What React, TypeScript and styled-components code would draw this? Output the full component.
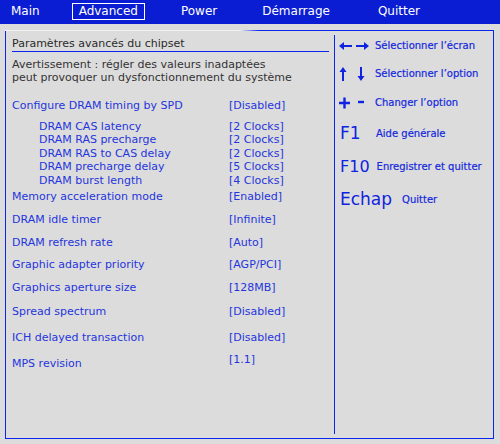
import React from "react";
import styled, { createGlobalStyle } from "styled-components";

const Global = createGlobalStyle`
  html, body { margin: 0; padding: 0; background: #dcdcdc; }
  body { font-family: "DejaVu Sans", Verdana, sans-serif; }
`;

const Page = styled.div`
  width: 500px;
  height: 444px;
  background: #dcdcdc;
  display: flex;
  flex-direction: column;
  overflow: hidden;
`;

const MenuBar = styled.div`
  height: 24px;
  background: #0a1dd2;
  display: flex;
  align-items: center;
  flex-shrink: 0;
`;

const MenuItem = styled.div<{ $x: number; $active?: boolean }>`
  margin-left: ${(p) => p.$x}px;
  height: 17px;
  line-height: 15px;
  padding: 0 6px;
  font-size: 12px;
  color: #ffffff;
  white-space: nowrap;
  box-sizing: border-box;
  border: 1px solid ${(p) => (p.$active ? "#ffffff" : "transparent")};
  margin-top: -1px;
`;

const Frame = styled.div`
  margin: 6px 0 0 5px;
  width: 489px;
  height: 409px;
  box-sizing: border-box;
  border: 1px solid #0a26ee;
  border-top: none;
  display: flex;
  flex-direction: column;
`;

const TopEdge = styled.div`
  height: 1px;
  margin: 0 -1px;
  background: linear-gradient(to right, #f2f2f2 0%, #f2f2f2 48%, #0a26ee 52%, #0a26ee 100%);
  flex-shrink: 0;
`;

const Body = styled.div`
  flex: 1;
  display: flex;
`;

const LeftPanel = styled.div`
  width: 328px;
  padding: 5px 5px 0 6px;
  box-sizing: border-box;
  display: flex;
  flex-direction: column;
`;

const Divider = styled.div`
  width: 1px;
  background: #0a26ee;
  margin: 4px 0 4px 0;
`;

const RightPanel = styled.div`
  flex: 1;
  padding: 1px 0 0 2px;
  display: flex;
  flex-direction: column;
`;

const Title = styled.div`
  font-size: 11px;
  line-height: 15px;
  color: #2a2a2a;
  border-bottom: 1px solid #0a26ee;
  white-space: nowrap;
`;

const Warning = styled.div`
  margin-top: 6px;
  font-size: 11px;
  line-height: 13px;
  color: #333333;
  white-space: nowrap;
`;

const Row = styled.div<{ $mt: number; $sub?: boolean }>`
  display: grid;
  grid-template-columns: 217px 1fr;
  align-items: start;
  margin-top: ${(p) => p.$mt}px;
  font-size: 11px;
  line-height: ${(p) => (p.$sub ? "13.5px" : "14px")};
  color: #2535dc;
  white-space: nowrap;
`;

const Label = styled.div<{ $indent?: boolean }>`
  padding-left: ${(p) => (p.$indent ? 27 : 0)}px;
`;

const Value = styled.div<{ $lift?: number }>`
  margin-top: ${(p) => -(p.$lift || 0)}px;
`;

const SubGroup = styled.div`
  display: flex;
  flex-direction: column;
  margin-top: 7px;
`;

const HelpRow = styled.div<{ $h: number; $gap: number; $pl: number }>`
  height: ${(p) => p.$h}px;
  display: flex;
  align-items: center;
  gap: ${(p) => p.$gap}px;
  padding-left: ${(p) => p.$pl}px;
  color: #0f23e0;
  white-space: nowrap;
`;

const KeyIcon = styled.div`
  width: 36px;
  display: flex;
  align-items: center;
`;

const KeyText = styled.div<{ $size: number }>`
  font-size: ${(p) => p.$size}px;
  line-height: 1;
`;

const HelpText = styled.div`
  font-size: 10px;
  line-height: 12px;
  color: #1428dc;
  -webkit-text-stroke: 0.2px #1428dc;
`;

const BLUE = "#0f23e0";

const ArrowsLR = () => (
  <svg width="32" height="12" viewBox="0 0 32 12">
    <path d="M3 6 H14" stroke={BLUE} strokeWidth="2" />
    <path d="M1 6 L6 2 L6 10 Z" fill={BLUE} />
    <path d="M18 6 H29" stroke={BLUE} strokeWidth="2" />
    <path d="M31 6 L26 2 L26 10 Z" fill={BLUE} />
  </svg>
);

const ArrowsUD = () => (
  <svg width="30" height="16" viewBox="0 0 30 16">
    <path d="M5 4 V15" stroke={BLUE} strokeWidth="2" />
    <path d="M5 1 L1.5 6 L8.5 6 Z" fill={BLUE} />
    <path d="M23 1 V12" stroke={BLUE} strokeWidth="2" />
    <path d="M23 15 L19.5 10 L26.5 10 Z" fill={BLUE} />
  </svg>
);

const PlusMinus = () => (
  <svg width="30" height="12" viewBox="0 0 30 12">
    <path d="M1 6 H12 M6.5 0.5 V11.5" stroke={BLUE} strokeWidth="2.4" />
    <path d="M20 5 H26" stroke={BLUE} strokeWidth="2.4" />
  </svg>
);

const menu = [
  { label: "Main", x: 4 },
  { label: "Advanced", x: 25, active: true },
  { label: "Power", x: 29 },
  { label: "Démarrage", x: 31 },
  { label: "Quitter", x: 34 },
];

const subs: [string, string][] = [
  ["DRAM CAS latency", "[2 Clocks]"],
  ["DRAM RAS precharge", "[2 Clocks]"],
  ["DRAM RAS to CAS delay", "[2 Clocks]"],
  ["DRAM precharge delay", "[5 Clocks]"],
  ["DRAM burst length", "[4 Clocks]"],
];

const rows: { label: string; value: string; mt: number; lift?: number }[] = [
  { label: "Memory acceleration mode", value: "[Enabled]", mt: 2.5 },
  { label: "DRAM idle timer", value: "[Infinite]", mt: 9 },
  { label: "DRAM refresh rate", value: "[Auto]", mt: 9 },
  { label: "Graphic adapter priority", value: "[AGP/PCI]", mt: 8 },
  { label: "Graphics aperture size", value: "[128MB]", mt: 9 },
  { label: "Spread spectrum", value: "[Disabled]", mt: 10 },
  { label: "ICH delayed transaction", value: "[Disabled]", mt: 12 },
  { label: "MPS revision", value: "[1.1]", mt: 12, lift: 4 },
];

export default function App() {
  return (
    <Page>
      <Global />
      <MenuBar>
        {menu.map((m) => (
          <MenuItem key={m.label} $x={m.x} $active={m.active}>
            {m.label}
          </MenuItem>
        ))}
      </MenuBar>
      <Frame>
        <TopEdge />
        <Body>
          <LeftPanel>
            <Title>Paramètres avancés du chipset</Title>
            <Warning>
              Avertissement : régler des valeurs inadaptées
              <br />
              peut provoquer un dysfonctionnement du système
            </Warning>
            <Row $mt={14.5}>
              <Label>Configure DRAM timing by SPD</Label>
              <Value>[Disabled]</Value>
            </Row>
            <SubGroup>
              {subs.map(([l, v]) => (
                <Row key={l} $mt={0} $sub>
                  <Label $indent>{l}</Label>
                  <Value>{v}</Value>
                </Row>
              ))}
            </SubGroup>
            {rows.map((r) => (
              <Row key={r.label} $mt={r.mt}>
                <Label>{r.label}</Label>
                <Value $lift={r.lift}>{r.value}</Value>
              </Row>
            ))}
          </LeftPanel>
          <Divider />
          <RightPanel>
            <HelpRow $h={28} $gap={1} $pl={1}>
              <KeyIcon>
                <ArrowsLR />
              </KeyIcon>
              <HelpText>Sélectionner l’écran</HelpText>
            </HelpRow>
            <HelpRow $h={28} $gap={1} $pl={1}>
              <KeyIcon>
                <ArrowsUD />
              </KeyIcon>
              <HelpText>Sélectionner l’option</HelpText>
            </HelpRow>
            <HelpRow $h={29} $gap={1} $pl={1}>
              <KeyIcon>
                <PlusMinus />
              </KeyIcon>
              <HelpText>Changer l’option</HelpText>
            </HelpRow>
            <HelpRow $h={33} $gap={0} $pl={3}>
              <KeyIcon>
                <KeyText $size={17}>F1</KeyText>
              </KeyIcon>
              <HelpText>Aide générale</HelpText>
            </HelpRow>
            <HelpRow $h={33} $gap={7} $pl={3}>
              <KeyText $size={16}>F10</KeyText>
              <HelpText>Enregistrer et quitter</HelpText>
            </HelpRow>
            <HelpRow $h={33} $gap={10} $pl={3}>
              <KeyText $size={17}>Echap</KeyText>
              <HelpText>Quitter</HelpText>
            </HelpRow>
          </RightPanel>
        </Body>
      </Frame>
    </Page>
  );
}
